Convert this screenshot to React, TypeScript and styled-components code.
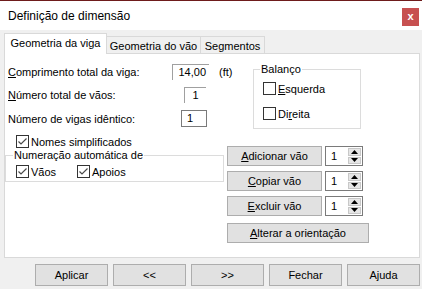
import React from "react";
import styled, { createGlobalStyle } from "styled-components";

const GlobalStyle = createGlobalStyle`
  html, body {
    margin: 0;
    padding: 0;
  }
  body {
    font-family: "Liberation Sans", Arial, sans-serif;
    font-size: 11px;
    color: #000;
    background: #f0f0f0;
  }
  * {
    box-sizing: border-box;
  }
`;

function Check({ checked }: { checked?: boolean }) {
  return (
    <Box>
      {checked && (
        <svg width="11" height="11" viewBox="0 0 11 11">
          <path d="M1.5 5.5 L4 8 L9.5 2.5" fill="none" stroke="#4a4a4a" strokeWidth="1.2" />
        </svg>
      )}
    </Box>
  );
}

function Spinner({ value }: { value: string }) {
  return (
    <SpinBox>
      <SpinValue>{value}</SpinValue>
      <SpinArrows>
        <SpinArrow>
          <svg width="7" height="4" viewBox="0 0 7 4">
            <polygon points="3.5,0 7,4 0,4" fill="#000" />
          </svg>
        </SpinArrow>
        <SpinArrow>
          <svg width="7" height="4" viewBox="0 0 7 4">
            <polygon points="0,0 7,0 3.5,4" fill="#000" />
          </svg>
        </SpinArrow>
      </SpinArrows>
    </SpinBox>
  );
}

export default function App() {
  return (
    <Window>
      <GlobalStyle />
      <TitleBar>
        <Title>Definição de dimensão</Title>
        <CloseButton>x</CloseButton>
      </TitleBar>
      <Body>
        <TabStrip>
          <Tab $active $width={103}>Geometria da viga</Tab>
          <Tab $width={95}>Geometria do vão</Tab>
          <Tab $width={65}>Segmentos</Tab>
        </TabStrip>
        <Panel>
          <LeftColumn>
            <FieldGrid>
              <FieldRow $h={16}>
                <FieldLabel><u>C</u>omprimento total da viga:</FieldLabel>
                <SunkenInput $width={37} $inset={0} $align="right">14,00</SunkenInput>
              </FieldRow>
              <Unit>(ft)</Unit>
              <FieldRow $h={16}>
                <FieldLabel><u>N</u>úmero total de vãos:</FieldLabel>
                <SunkenInput $width={22} $inset={3} $align="center">1</SunkenInput>
              </FieldRow>
              <span />
              <FieldRow $h={17}>
                <FieldLabel>Número de vigas idêntico:</FieldLabel>
                <BoxInput>1</BoxInput>
              </FieldRow>
              <span />
            </FieldGrid>
            <CheckRow $indent={11} $top={8}>
              <Check checked />
              <span>Nomes simplificados</span>
            </CheckRow>
            <GroupBox $width={219} $height={33}>
              <Legend>Numeração automática de</Legend>
              <GroupRow>
                <CheckItem $width={61}>
                  <Check checked />
                  <span>Vãos</span>
                </CheckItem>
                <CheckItem>
                  <Check checked />
                  <span>Apoios</span>
                </CheckItem>
              </GroupRow>
            </GroupBox>
          </LeftColumn>
          <RightColumn>
            <BalancoBox $width={108} $height={66}>
              <BalancoLegend>Balanço</BalancoLegend>
              <CheckRow $indent={0} $top={6}>
                <Check />
                <span><u>E</u>squerda</span>
              </CheckRow>
              <CheckRow $indent={0} $top={12}>
                <Check />
                <span>Di<u>r</u>eita</span>
              </CheckRow>
            </BalancoBox>
            <ActionStack>
              <ActionRow>
                <Button $width={95}><u>A</u>dicionar vão</Button>
                <Spinner value="1" />
              </ActionRow>
              <ActionRow>
                <Button $width={95}><u>C</u>opiar vão</Button>
                <Spinner value="1" />
              </ActionRow>
              <ActionRow>
                <Button $width={95}><u>E</u>xcluir vão</Button>
                <Spinner value="1" />
              </ActionRow>
              <ActionRow $top={2}>
                <Button $width={142}><u>A</u>lterar a orientação</Button>
              </ActionRow>
            </ActionStack>
          </RightColumn>
        </Panel>
        <Footer>
          <FooterButton>Aplicar</FooterButton>
          <FooterButton>&lt;&lt;</FooterButton>
          <FooterButton>&gt;&gt;</FooterButton>
          <FooterButton>Fechar</FooterButton>
          <FooterButton>Ajuda</FooterButton>
        </Footer>
      </Body>
    </Window>
  );
}

const Window = styled.div`
  width: 422px;
  height: 289px;
  display: flex;
  flex-direction: column;
  background: #f0f0f0;
  border-top: 1px solid #6e1b1b;
  overflow: hidden;
`;

const TitleBar = styled.div`
  height: 29px;
  flex: 0 0 29px;
  background: #fff;
  display: flex;
  align-items: center;
  justify-content: space-between;
  padding: 0 3px 0 8px;
`;

const Title = styled.div`
  font-size: 12px;
  margin-top: 1px;
`;

const CloseButton = styled.div`
  align-self: flex-start;
  margin-top: 7px;
  width: 17px;
  height: 18px;
  background: #c75050;
  color: #fff;
  font-weight: bold;
  font-size: 11px;
  display: flex;
  align-items: center;
  justify-content: center;
  padding-bottom: 2px;
`;

const Body = styled.div`
  display: flex;
  flex-direction: column;
  padding: 3px 2px 0 4px;
`;

const TabStrip = styled.div`
  display: flex;
  align-items: flex-end;
  height: 20px;
`;

const Tab = styled.div<{ $active?: boolean; $width: number }>`
  position: relative;
  width: ${p => p.$width}px;
  height: ${p => (p.$active ? 21 : 17)}px;
  margin-bottom: ${p => (p.$active ? -1 : 0)}px;
  margin-left: ${p => (p.$active ? 0 : -1)}px;
  z-index: ${p => (p.$active ? 1 : 0)};
  background: ${p => (p.$active ? "#fff" : "#f0f0f0")};
  border: 1px solid #d9d9d9;
  border-bottom: none;
  text-align: center;
  line-height: ${p => (p.$active ? 19 : 17)}px;
  padding-top: ${p => (p.$active ? 0 : 1)}px;
  white-space: nowrap;

  &:first-child {
    margin-left: 0;
  }
`;

const Panel = styled.div`
  height: 205px;
  background: #fff;
  border: 1px solid #d9d9d9;
  padding: 9px 0 0 0;
  display: flex;
  gap: 3px;
`;

const LeftColumn = styled.div`
  width: 219px;
  flex: 0 0 219px;
  display: flex;
  flex-direction: column;
`;

const RightColumn = styled.div`
  display: flex;
  flex-direction: column;
`;

const FieldGrid = styled.div`
  display: grid;
  grid-template-columns: 201px 20px;
  column-gap: 10px;
  row-gap: 7px;
  margin-top: 1px;
  padding-left: 3px;
`;

const FieldRow = styled.div<{ $h: number }>`
  height: ${p => p.$h}px;
  display: flex;
  align-items: center;
`;

const FieldLabel = styled.div`
  flex: 1;
  white-space: nowrap;
`;

const SunkenInput = styled.div<{ $width: number; $inset: number; $align: string }>`
  width: ${p => p.$width}px;
  margin-right: ${p => p.$inset}px;
  height: 16px;
  border-top: 1px solid #a0a0a0;
  border-left: 1px solid #a0a0a0;
  background: #fff;
  text-align: ${p => p.$align};
  padding-right: ${p => (p.$align === "right" ? 3 : 0)}px;
  line-height: 15px;
`;

const BoxInput = styled.div`
  width: 26px;
  height: 17px;
  margin-right: 2px;
  border: 1px solid #7a7a7a;
  padding-left: 5px;
  line-height: 15px;
`;

const Unit = styled.div`
  display: flex;
  align-items: center;
  white-space: nowrap;
`;

const Box = styled.div`
  width: 13px;
  height: 13px;
  flex: 0 0 13px;
  border: 1px solid #333;
  background: #fff;
  display: flex;
  align-items: center;
  justify-content: center;
`;

const CheckRow = styled.div<{ $indent: number; $top: number }>`
  display: flex;
  align-items: center;
  gap: 2px;
  height: 13px;
  padding-left: ${p => p.$indent}px;
  margin-top: ${p => p.$top}px;
  white-space: nowrap;
`;

const GroupBox = styled.fieldset<{ $width: number; $height: number }>`
  width: ${p => p.$width}px;
  height: ${p => p.$height}px;
  margin: 1px 0 0 0;
  padding: 0;
  border: 1px solid #dcdcdc;
  min-inline-size: 0;
`;

const BalancoBox = styled(GroupBox)`
  margin: 0 0 0 26px;
  padding: 0 0 0 9px;
`;

const Legend = styled.legend`
  margin-left: 7px;
  padding: 0 1px;
  line-height: 13px;
  height: 13px;
  white-space: nowrap;
`;

const BalancoLegend = styled(Legend)`
  margin-left: -3px;
`;

const GroupRow = styled.div`
  display: flex;
  padding: 3px 0 0 10px;
`;

const CheckItem = styled.div<{ $width?: number }>`
  display: flex;
  align-items: center;
  gap: 2px;
  height: 13px;
  width: ${p => (p.$width ? `${p.$width}px` : "auto")};
`;

const ActionStack = styled.div`
  display: flex;
  flex-direction: column;
  gap: 5px;
  margin-top: 17px;
`;

const ActionRow = styled.div<{ $top?: number }>`
  display: flex;
  gap: 3px;
  margin-top: ${p => p.$top ?? 0}px;
`;

const Button = styled.div<{ $width: number }>`
  width: ${p => p.$width}px;
  height: 20px;
  background: #e1e1e1;
  border: 1px solid #adadad;
  display: flex;
  align-items: center;
  justify-content: center;
  white-space: nowrap;
`;

const SpinBox = styled.div`
  width: 38px;
  height: 20px;
  border: 1px solid #7a7a7a;
  background: #fff;
  display: flex;
  align-items: center;
  justify-content: space-between;
  padding: 1px;
`;

const SpinValue = styled.span`
  padding-left: 4px;
`;

const SpinArrows = styled.div`
  width: 13px;
  height: 100%;
  display: flex;
  flex-direction: column;
  gap: 1px;
`;

const SpinArrow = styled.div`
  flex: 1;
  background: #e6e6e6;
  border: 1px solid #c8c8c8;
  display: flex;
  align-items: center;
  justify-content: center;
`;

const Footer = styled.div`
  display: flex;
  justify-content: flex-end;
  gap: 5px;
  padding-top: 6px;
`;

const FooterButton = styled.div`
  width: 73px;
  height: 22px;
  background: #e1e1e1;
  border: 1px solid #adadad;
  display: flex;
  align-items: center;
  justify-content: center;
  font-size: 11px;
`;
